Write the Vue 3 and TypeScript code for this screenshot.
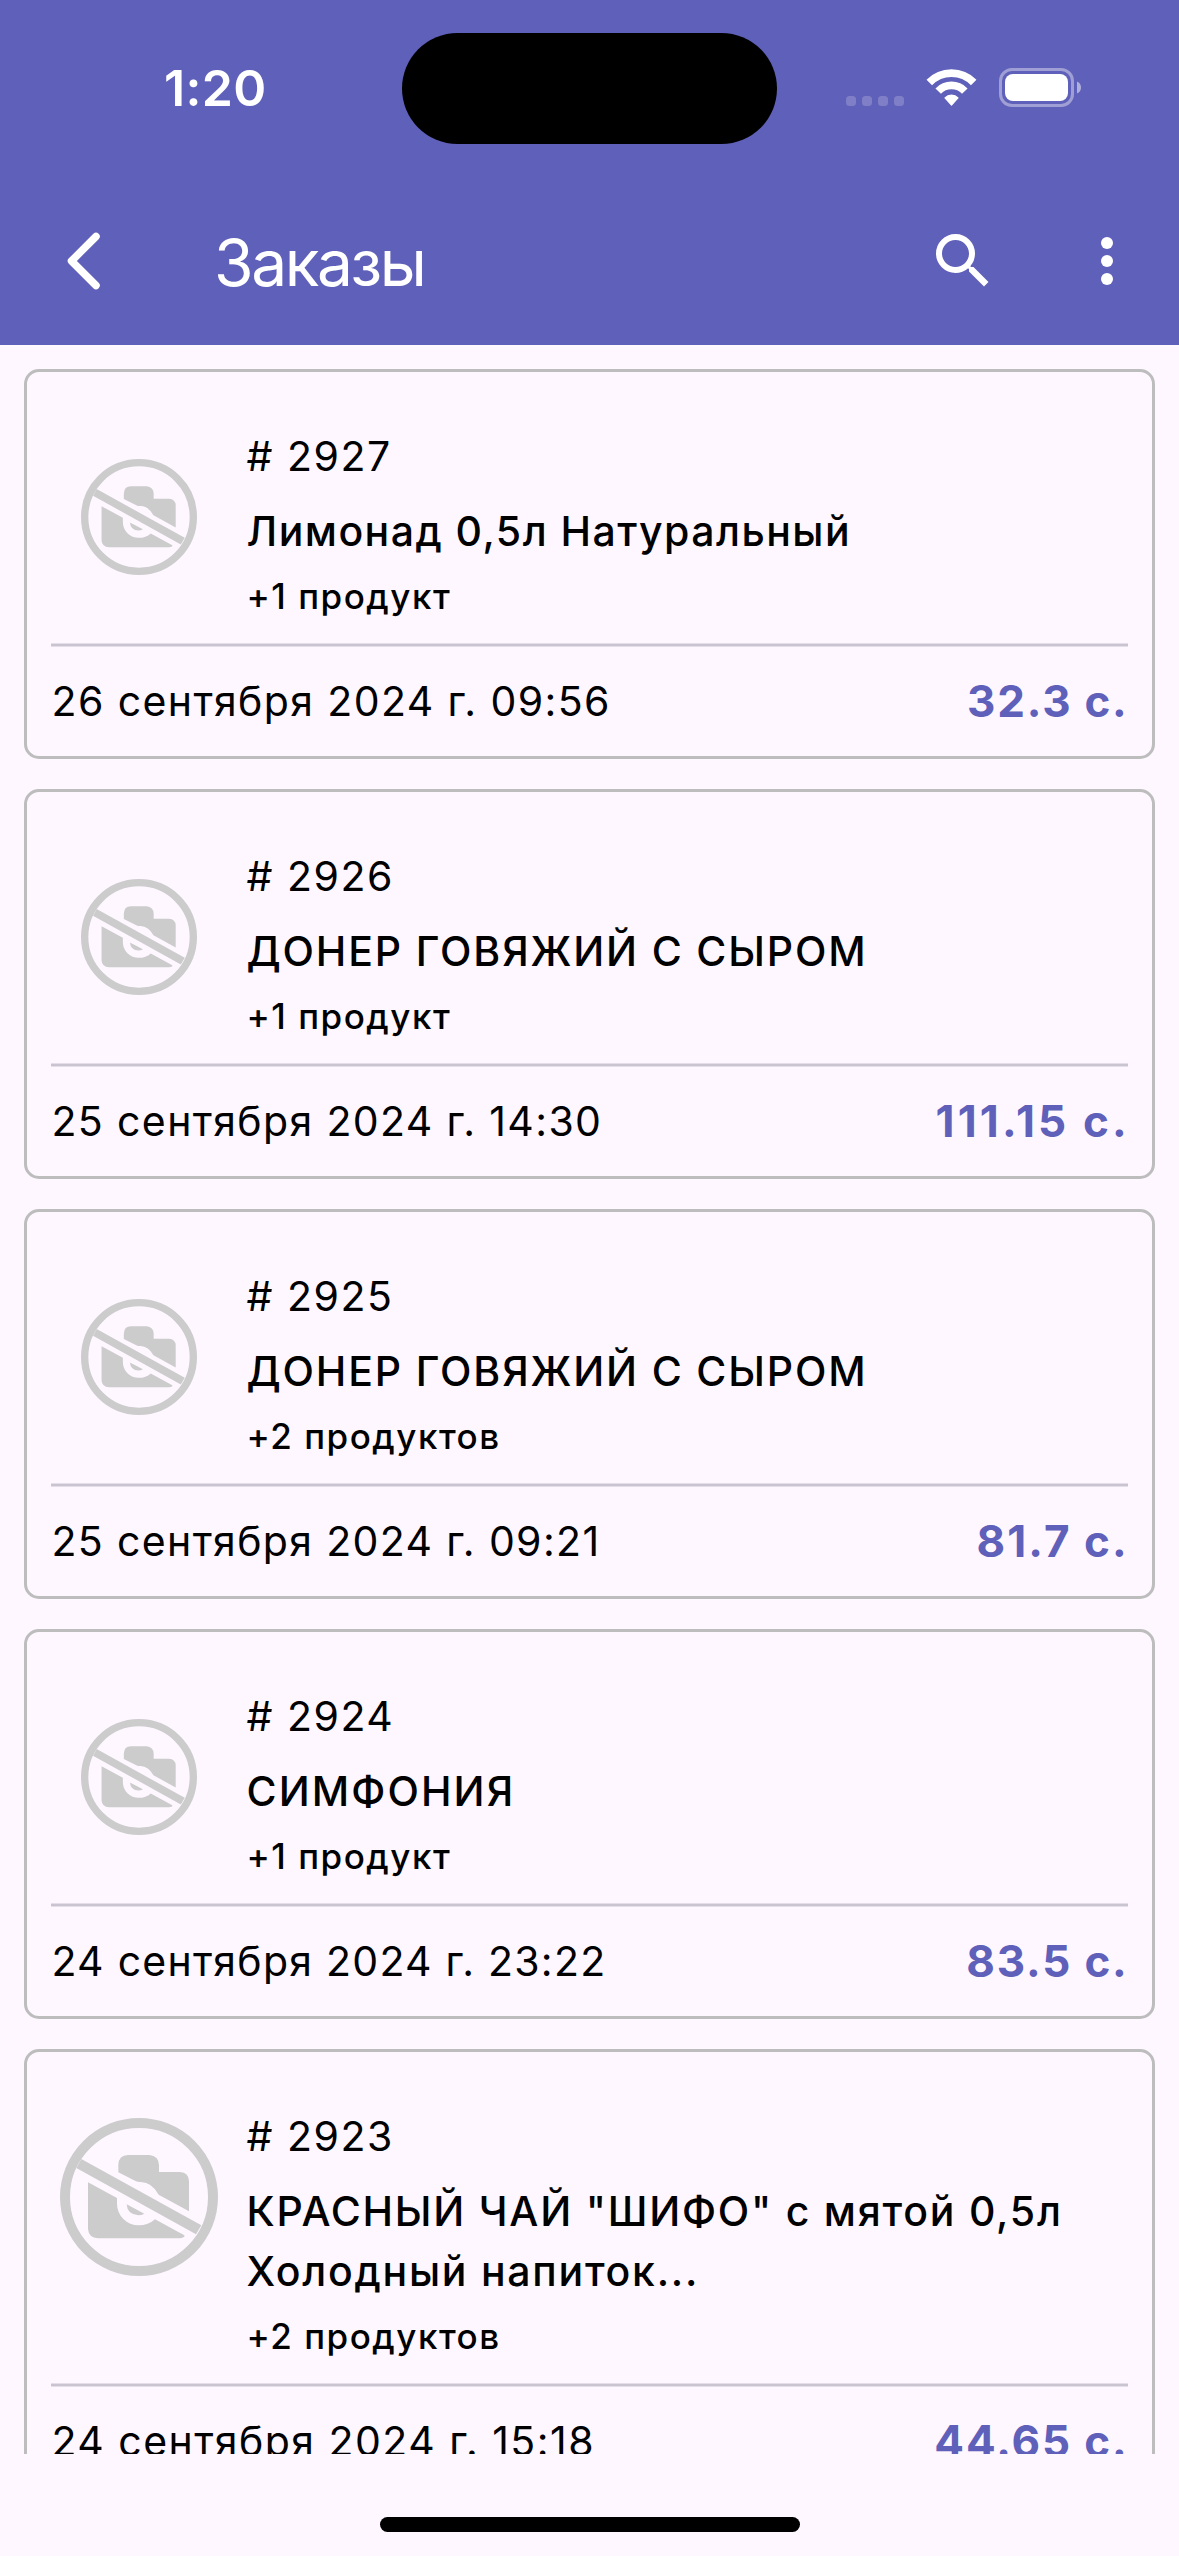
<script setup lang="ts">
interface Text {
  text: string
  tracking: number
}

interface Order {
  id: number
  title: Text[]
  more: string
  date: Text
  price: Text
}

const t = (text: string, tracking: number): Text => ({ text, tracking })

const orders: Order[] = [
  {
    id: 2927,
    title: [t('Лимонад 0,5л Натуральный', 1.46)],
    more: '+1 продукт',
    date: t('26 сентября 2024 г. 09:56', 1.4),
    price: t('32.3 с.', 1.75),
  },
  {
    id: 2926,
    title: [t('ДОНЕР ГОВЯЖИЙ С СЫРОМ', 1.84)],
    more: '+1 продукт',
    date: t('25 сентября 2024 г. 14:30', 1.37),
    price: t('111.15 с.', 3.2),
  },
  {
    id: 2925,
    title: [t('ДОНЕР ГОВЯЖИЙ С СЫРОМ', 1.84)],
    more: '+2 продуктов',
    date: t('25 сентября 2024 г. 09:21', 1.35),
    price: t('81.7 с.', 2.1),
  },
  {
    id: 2924,
    title: [t('СИМФОНИЯ', 2.1)],
    more: '+1 продукт',
    date: t('24 сентября 2024 г. 23:22', 1.26),
    price: t('83.5 с.', 1.8),
  },
  {
    id: 2923,
    title: [t('КРАСНЫЙ ЧАЙ "ШИФО" с мятой 0,5л', 1.77), t('Холодный напиток...', 1.74)],
    more: '+2 продуктов',
    date: t('24 сентября 2024 г. 15:18', 1.47),
    price: t('44.65 с.', 1.9),
  },
]

const track = (item: Text) => ({ '--tracking': `${item.tracking}px` })
</script>

<template>
  <div class="screen">
    <header class="header">
      <div class="status">
        <div class="clock"><span>1:20</span></div>
        <div class="island"></div>
        <div class="indicators">
          <svg class="cell" width="58" height="10" viewBox="0 0 58 10">
            <rect v-for="n in 4" :key="n" :x="(n - 1) * 16" y="0" width="10" height="10" rx="3.5" />
          </svg>
          <svg class="wifi" width="51" height="38" viewBox="0 0 51 38" fill="none" stroke="#fff" stroke-width="7.7">
            <path d="M3.3 13.5A30.9 30.9 0 0 1 47.7 13.5" />
            <path d="M12.2 22.1A18.5 18.5 0 0 1 38.8 22.1" />
            <path d="M25.5 36L19 28.9A9 9 0 0 1 32 28.9z" fill="#fff" stroke-width="1.2" stroke-linejoin="round" />
          </svg>
          <svg class="battery" width="82" height="39" viewBox="0 0 82 39">
            <rect x="1.5" y="1.5" width="72" height="36" rx="11.5" fill="none" stroke="#fff" stroke-opacity=".4" stroke-width="3" />
            <rect x="6" y="6" width="63" height="27" rx="8" fill="#fff" />
            <path d="M78 13.5c2.5 1 4 3.200 4 6s-1.500 5-4 6z" fill="#fff" fill-opacity=".5" />
          </svg>
        </div>
      </div>
      <div class="toolbar">
        <svg class="back" width="36" height="60" viewBox="0 0 36 60">
          <path d="M31 5.5L6.5 30L31 54.5" fill="none" stroke="#fff" stroke-width="7.5" stroke-linecap="round" stroke-linejoin="round" />
        </svg>
        <h1>Заказы</h1>
        <svg class="search" width="72" height="72" viewBox="0 0 24 24" fill="#fff">
          <path d="M15.500 14h-.79l-.28-.27A6.471 6.471 0 0 0 16 9.500 6.500 6.500 0 1 0 9.500 16c1.610 0 3.090-.59 4.230-1.570l.27.28v.79l5 4.990L20.490 19l-4.990-5zm-6 0C7.010 14 5 11.990 5 9.500S7.010 5 9.500 5 14 7.010 14 9.500 11.990 14 9.500 14z" />
        </svg>
        <svg class="more" width="72" height="72" viewBox="0 0 24 24" fill="#fff">
          <circle cx="12" cy="6" r="2" />
          <circle cx="12" cy="12" r="2" />
          <circle cx="12" cy="18" r="2" />
        </svg>
      </div>
    </header>

    <main class="list">
      <article v-for="order in orders" :key="order.id" class="card">
        <div class="body">
          <div class="thumb" :class="{ tall: order.title.length > 1 }">
            <svg viewBox="60 83 474 474" fill="#ccc">
              <circle cx="297" cy="320" r="222" fill="none" stroke="#ccc" stroke-width="30" />
              <path d="M124 206L484 405L468 432L109 233z" />
              <path d="M235 246V224Q236 194 264 194H328Q356 196 357 225V245H420Q446 247 447 272V363L356 313Q336 276 303 275Q295 276 288 273z" />
              <path d="M144 276L231 323V340A65 65 0 0 0 296 405Q325 405 345 387L433 435Q437 441 420 444H174Q146 442 144 416z" />
              <path d="M260 342L313 370Q305 375 295 375Q262 373 260 342z" />
            </svg>
          </div>
          <div class="info">
            <p class="number"># {{ order.id }}</p>
            <p class="title">
              <span v-for="line in order.title" :key="line.text" :style="track(line)">{{ line.text }}</span>
            </p>
            <p class="extra">{{ order.more }}</p>
          </div>
        </div>
        <div class="divider"></div>
        <div class="foot">
          <span class="date" :style="track(order.date)">{{ order.date.text }}</span>
          <span class="price" :style="track(order.price)">{{ order.price.text }}</span>
        </div>
      </article>
    </main>

    <footer class="home"><div class="bar"></div></footer>
  </div>
</template>

<style>
body {
  margin: 0;
  background: #fef7ff;
}
</style>

<style scoped>
.screen {
  width: 1179px;
  height: 2556px;
  display: flex;
  flex-direction: column;
  overflow: hidden;
  background: #fef7ff;
  color: #000;
  font-family: Inter, "Liberation Sans", sans-serif;
}

.header {
  flex: none;
  height: 345px;
  background: #5f60b9;
  color: #fff;
}

.status {
  height: 177px;
  display: flex;
  align-items: flex-start;
}

.clock {
  width: 402px;
  padding-top: 58px;
  box-sizing: border-box;
  font-size: 50px;
  line-height: 60px;
  font-weight: 600;
  letter-spacing: 0.3px;
}

.clock span {
  margin-left: 164px;
}

.island {
  width: 375px;
  height: 111px;
  margin-top: 33px;
  border-radius: 56px;
  background: #000;
}

.indicators {
  display: flex;
  align-items: flex-start;
  padding-left: 69px;
}

.cell {
  margin-top: 96px;
  fill: #fff;
  fill-opacity: 0.2;
}

.wifi {
  margin: 69px 0 0 22px;
}

.battery {
  margin: 68px 0 0 22px;
}

.toolbar {
  height: 168px;
  display: flex;
  align-items: center;
}

.back {
  margin-left: 65px;
}

h1 {
  flex: 1;
  margin: 3px 0 0 113px;
  font-size: 64px;
  line-height: 80px;
  font-weight: 400;
  letter-spacing: -2.4px;
}

.search {
  margin-right: 72px;
}

.more {
  margin-right: 36px;
}

.list {
  flex: none;
  height: 2109px;
  padding: 24px 24px 0;
  box-sizing: border-box;
  overflow: hidden;
}

.card {
  margin-bottom: 30px;
  padding: 0 24px;
  border: 3px solid #bdbdbd;
  border-radius: 15px;
}

.body {
  display: flex;
  gap: 19.5px;
  padding: 54px 0 23px;
}

.thumb {
  width: 175px;
  height: 181px;
  margin-right: 1px;
  display: flex;
  align-items: center;
  justify-content: center;
}

.thumb svg {
  width: 116px;
  height: 116px;
}

.thumb.tall svg {
  width: 158px;
  height: 158px;
}

p {
  margin: 0;
}

.number {
  font-size: 41px;
  line-height: 60px;
  letter-spacing: 1.5px;
}

.title {
  margin: 15px 0 11px;
  font-size: 41px;
  line-height: 60px;
  font-weight: 450;
}

.title span {
  display: block;
  white-space: nowrap;
  letter-spacing: var(--tracking);
}

.extra {
  font-size: 35px;
  line-height: 48px;
  font-weight: 450;
  letter-spacing: 1.5px;
}

.divider {
  height: 4px;
  background: linear-gradient(#e4ddea 1px, #cac4d0 1px, #cac4d0 3px, #e4ddea 3px);
}

.foot {
  height: 109px;
  padding-bottom: 2px;
  box-sizing: border-box;
  display: flex;
  align-items: center;
  justify-content: space-between;
}

.date {
  padding-left: 0.5px;
  font-size: 41px;
  letter-spacing: var(--tracking);
}

.price {
  margin-right: calc(1.2px - var(--tracking));
  font-size: 44px;
  font-weight: 700;
  letter-spacing: var(--tracking);
  color: #5f60b9;
}

.home {
  flex: 1;
  display: flex;
  justify-content: center;
  align-items: flex-start;
  padding-top: 63px;
}

.bar {
  width: 420px;
  height: 15px;
  border-radius: 8px;
  background: #000;
}
</style>
